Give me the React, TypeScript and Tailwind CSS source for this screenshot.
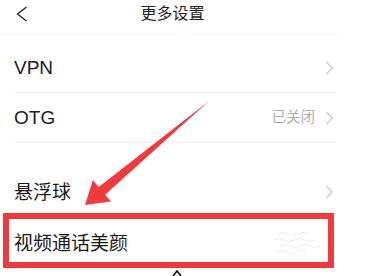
const font = { fontFamily: '"Liberation Sans", "Noto Sans CJK SC", sans-serif' };

const Chevron = () => (
  <svg width="9" height="14" viewBox="0 0 9 14" className="shrink-0">
    <path d="M1.5 1 L7.5 7 L1.5 13" fill="none" stroke="#c8c8c8" strokeWidth="1.2" />
  </svg>
);

const Row = ({ label, value, chevron = true, divider = true, height = 'h-[50px]' }: { label: string; value?: string; chevron?: boolean; divider?: boolean; height?: string }) => (
  <div className={`${height} ml-[15px] w-[321px] flex items-center justify-between ${divider ? 'border-b border-[#f0f0f0]' : ''}`}>
    <span className="text-[19px] text-[#1a1a1a] -ml-[1px] leading-none">{label}</span>
    <div className="flex items-center gap-[10px] pr-[2px]">
      {value && <span className="text-[14.5px] text-[#adadad] leading-none">{value}</span>}
      {chevron && <Chevron />}
    </div>
  </div>
);

export default function App() {
  return (
    <div className="relative w-[370px] h-[276px] bg-white overflow-hidden" style={font}>
      <div className="h-[36px] w-[343px] grid grid-cols-[1fr_auto_1fr] items-center border-b border-[#f4f4f4]">
        <svg width="12" height="16" viewBox="0 0 12 16" className="ml-[16px] -mt-[8px]">
          <path d="M10.5 1 L1.5 8 L10.5 15" fill="none" stroke="#222" strokeWidth="1.3" />
        </svg>
        <span className="text-[16px] text-[#222] -mt-[7px] ml-[2px]">更多设置</span>
        <div />
      </div>
      <div className="h-[7px]" />
      <Row label="VPN" />
      <Row label="OTG" value="已关闭" />
      <div className="h-[24px]" />
      <Row label="悬浮球" divider={false} />
      <Row label="视频通话美颜" chevron={false} divider={false} height="h-[52px]" />

      {/* faint watermark */}
      <svg className="absolute left-[270px] top-[228px]" width="64" height="36" viewBox="0 0 64 36">
        <g fill="none" stroke="#ececec" strokeWidth="1">
          <path d="M8 6 q5 -3 10 0 t10 0 t10 0" />
          <path d="M4 12 q5 -3 10 0 t10 0 t10 0 t10 0" />
          <path d="M10 18 q5 -3 10 0 t10 0 t10 0 t10 0" />
          <path d="M6 24 q5 -3 10 0 t10 0 t10 0" />
        </g>
      </svg>

      {/* red highlight box */}
      <div className="absolute left-[3px] top-[213px] w-[331px] h-[55px] border-[6px] border-[#ee3a3d]" />

      {/* red arrow */}
      <svg className="absolute left-0 top-0" width="370" height="276" viewBox="0 0 370 276">
        <polygon
          points="209,101 105.1,194.7 110.9,201.6 85,205 92.9,180.2 98.7,187.1"
          fill="#ef3b3e"
        />
      </svg>

      {/* bottom caret fragment */}
      <svg className="absolute left-[172px] top-[270px]" width="10" height="6" viewBox="0 0 10 6">
        <path d="M1 6 L5 1 L9 6" fill="none" stroke="#111" strokeWidth="1.6" />
      </svg>
    </div>
  );
}
